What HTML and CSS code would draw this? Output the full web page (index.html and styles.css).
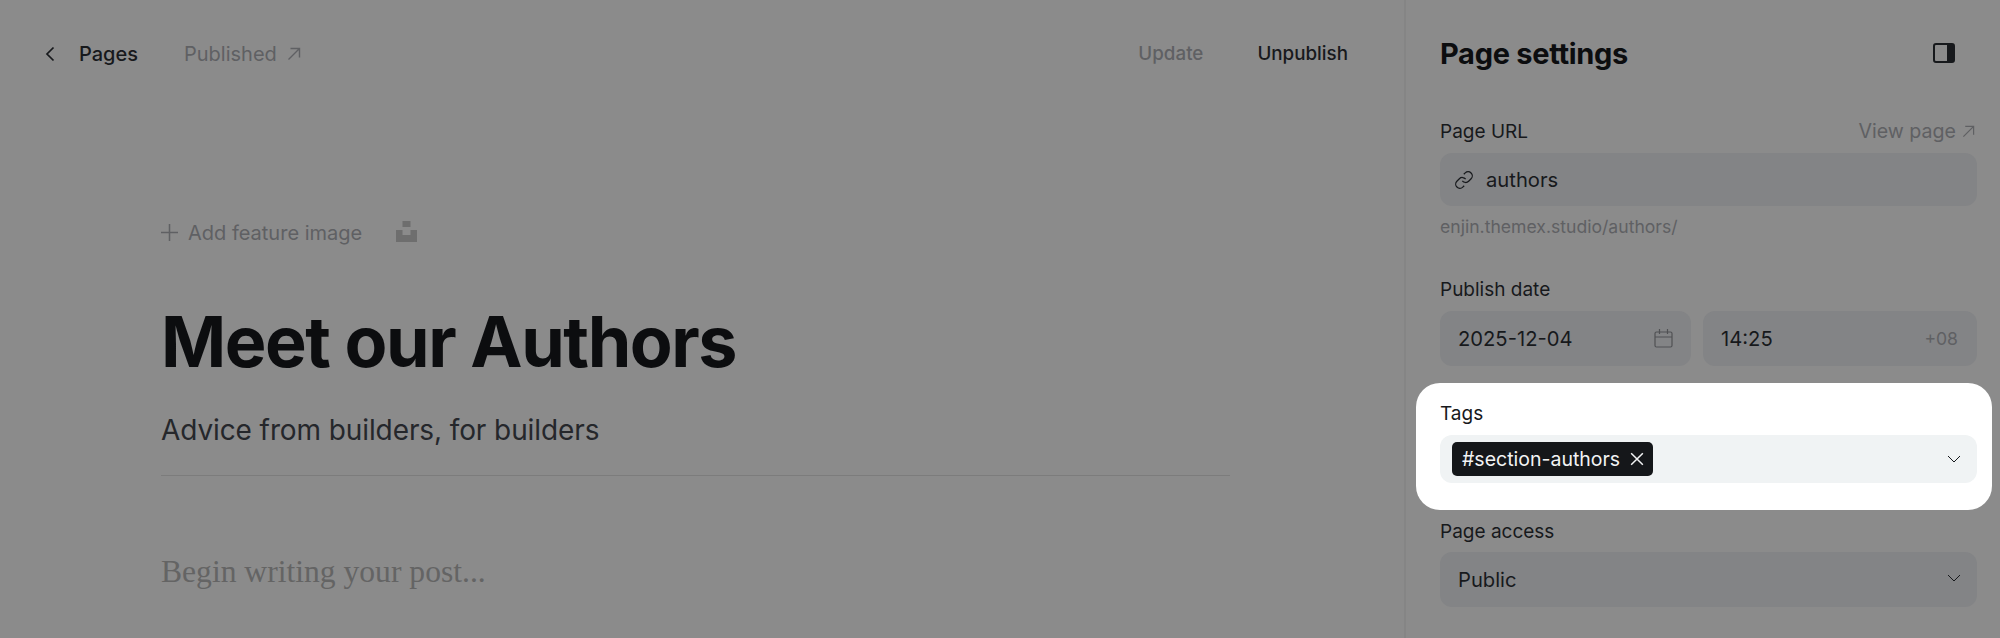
FILE: index.html
```html
<!DOCTYPE html>
<html lang="en">

<head>
  <meta charset="UTF-8" />
  <meta name="viewport" content="width=device-width, initial-scale=1.0" />
  <title>Page settings</title>
  <link rel="stylesheet" href="styles.css">
</head>

<body>
  <div class="container">
    <main class="editor">
      <header class="topbar">
        <div class="topbar-left">
          <svg class="back-icon" viewBox="0 0 12 16" fill="none" stroke="currentColor" stroke-width="1.7"><path d="M9.5 1.5 3 8l6.5 6.5" /></svg>
          <span class="crumb">Pages</span>
          <span class="status">Published
            <svg class="arrow-icon" viewBox="0 0 14 14" fill="none" stroke="currentColor" stroke-width="1.4"><path d="M1.5 12.5 12.5 1.5M3.5 1.5h9v9" /></svg>
          </span>
        </div>
        <div class="topbar-right">
          <span class="update">Update</span>
          <span class="unpublish">Unpublish</span>
        </div>
      </header>

      <section class="post">
        <div class="feature-row">
          <svg class="plus-icon" viewBox="0 0 18 18" fill="none" stroke="currentColor" stroke-width="1.6"><path d="M9 0v18M0 9h18" /></svg>
          <span class="feature-text">Add feature image</span>
          <svg class="unsplash-icon" viewBox="0 0 21 21" fill="currentColor"><path d="M6.5 0h8v6h-8zM0 9h6.500v5h8V9H21v12H0z" /></svg>
        </div>
        <h1 class="post-title">Meet our Authors</h1>
        <p class="post-excerpt">Advice from builders, for builders</p>
        <p class="post-body">Begin writing your post...</p>
      </section>
    </main>

    <aside class="sidebar">
      <div class="sidebar-head">
        <h2>Page settings</h2>
        <svg class="panel-icon" viewBox="0 0 22 20"><rect x="1" y="1" width="20" height="18" rx="2" fill="none" stroke="currentColor" stroke-width="2" /><path d="M14 1h5a2 2 0 0 1 2 2v14a2 2 0 0 1-2 2h-5z" fill="currentColor" /></svg>
      </div>

      <div class="field field-url">
        <div class="label-row">
          <label>Page URL</label>
          <span class="view-page">View page
            <svg class="arrow-icon small" viewBox="0 0 14 14" fill="none" stroke="currentColor" stroke-width="1.3"><path d="M1.5 12.5 12.5 1.5M3.5 1.5h9v9" /></svg>
          </span>
        </div>
        <div class="input url-input">
          <svg class="link-icon" viewBox="0 0 24 24" fill="none" stroke="currentColor" stroke-width="1.5"><path d="M10 13a5 5 0 0 0 7.540.54l3-3a5 5 0 0 0-7.070-7.070l-1.720 1.710" /><path d="M14 11a5 5 0 0 0-7.540-.54l-3 3a5 5 0 0 0 7.070 7.070l1.710-1.710" /></svg>
          <span>authors</span>
        </div>
        <p class="hint">enjin.themex.studio/authors/</p>
      </div>

      <div class="field field-date">
        <label>Publish date</label>
        <div class="date-row">
          <div class="input date-input">
            <span>2025-12-04</span>
            <svg class="calendar-icon" viewBox="0 0 19 19" fill="none" stroke="currentColor" stroke-width="1.2"><rect x="1" y="3" width="17" height="15" rx="1.500" /><path d="M1 8h17M5.500 0v5M13.500 0v5" /></svg>
          </div>
          <div class="input time-input">
            <span>14:25</span>
            <span class="timezone">+08</span>
          </div>
        </div>
      </div>

      <div class="field field-tags">
        <label>Tags</label>
        <div class="tags-input">
          <span class="tag">#section-authors
            <svg class="close-icon" viewBox="0 0 12 12" fill="none" stroke="currentColor" stroke-width="1.3"><path d="M1 1l10 10M11 1 1 11" /></svg>
          </span>
          <svg class="chevron-icon" viewBox="0 0 14 8" fill="none" stroke="currentColor" stroke-width="1"><path d="M1 1l6 6 6-6" /></svg>
        </div>
      </div>

      <div class="field field-access">
        <label>Page access</label>
        <div class="input select-input">
          <span>Public</span>
          <svg class="chevron-icon raised" viewBox="0 0 14 8" fill="none" stroke="currentColor" stroke-width="1"><path d="M1 1l6 6 6-6" /></svg>
        </div>
      </div>
    </aside>
  </div>
</body>

</html>
```

FILE: styles.css
```css
* {
  margin: 0;
  padding: 0;
  box-sizing: border-box;
}

body {
  font-family: Inter, "Noto Sans", sans-serif;
  background-color: #8b8b8b;
  color: #17191c;
}

svg {
  display: block;
  flex-shrink: 0;
}

.container {
  display: flex;
  width: 100vw;
  height: 100vh;
  overflow: hidden;
}

.editor {
  width: 1404px;
  flex-shrink: 0;
}

.topbar {
  display: flex;
  justify-content: space-between;
  align-items: center;
  height: 106px;
  padding: 1px 56px 0 44px;
  font-size: 18.800px;
  font-weight: 500;
}

.topbar-left,
.topbar-right,
.status {
  display: flex;
  align-items: center;
}

.topbar-left {
  font-size: 20px;
  font-weight: 400;
}

.back-icon {
  width: 12px;
  height: 16px;
  margin-right: 23px;
}

.crumb {
  margin-right: 46px;
  font-weight: 500;
}

.status {
  gap: 10px;
  color: #5f6063;
}

.arrow-icon {
  width: 14px;
  height: 14px;
}

.arrow-icon.small {
  width: 13px;
  height: 13px;
  margin-right: 2px;
}

.update {
  margin-right: 54px;
  color: #5f6063;
}

.post {
  width: 1230px;
  padding-left: 161px;
}

.feature-row {
  display: flex;
  align-items: center;
  height: 21px;
  margin-top: 116px;
  color: #5f6063;
  font-size: 20px;
}

.plus-icon {
  width: 17px;
  height: 17px;
  margin-right: 10px;
}

.unsplash-icon {
  width: 21px;
  height: 21px;
  margin-left: 34px;
  margin-bottom: 3px;
  color: #6e6e6e;
}

.post-title {
  margin-top: 56px;
  color: #0c0d0f;
  font-size: 70px;
  font-weight: 700;
  line-height: 85px;
  letter-spacing: -1.45px;
}

.post-excerpt {
  margin-top: 28px;
  padding-bottom: 26px;
  border-bottom: 1px solid #7c7c7c;
  color: #25272b;
  font-size: 28px;
  line-height: 37px;
  letter-spacing: -0.1px;
}

.post-body {
  margin-top: 77px;
  color: #646464;
  font-family: "Liberation Serif", serif;
  font-size: 31.600px;
  line-height: 38px;
}

.sidebar {
  flex: 1;
  padding: 0 23px 0 34px;
  border-left: 2px solid #858585;
}

.sidebar-head {
  display: flex;
  justify-content: space-between;
  align-items: center;
  height: 106px;
}

.sidebar-head h2 {
  color: #0c0d0f;
  font-size: 29px;
  font-weight: 700;
  letter-spacing: -0.3px;
}

.panel-icon {
  width: 22px;
  height: 20px;
  margin-right: 22px;
}

.field label {
  display: block;
  margin-bottom: -1px;
  padding-top: 1px;
  color: #17191c;
  font-size: 19px;
  font-weight: 400;
  line-height: 24px;
}

.label-row {
  display: flex;
  justify-content: space-between;
  align-items: center;
}

.view-page {
  display: flex;
  align-items: center;
  gap: 6px;
  color: #5f6063;
  font-size: 19.600px;
  line-height: 24px;
}

.input {
  display: flex;
  align-items: center;
  height: 55px;
  border-radius: 12px;
  background-color: #838486;
  font-size: 20.200px;
}

.field-url .label-row {
  margin-top: 13px;
}

.url-input {
  height: 53px;
  margin-top: 10px;
  padding-left: 14px;
  gap: 12px;
}

.link-icon {
  width: 20px;
  height: 20px;
}

.hint {
  margin-top: 10px;
  color: #5f6063;
  font-size: 17.600px;
  line-height: 22px;
}

.field-date {
  margin-top: 39px;
}

.date-row {
  display: grid;
  grid-template-columns: 251px 1fr;
  gap: 12px;
  margin-top: 10px;
}

.date-input,
.time-input,
.select-input {
  justify-content: space-between;
  padding: 0 18px;
}

.time-input {
  padding-right: 19px;
}

.calendar-icon {
  width: 19px;
  height: 19px;
  color: #505154;
}

.timezone {
  color: #5f6063;
  font-size: 17.600px;
}

.field-tags {
  margin: 17px -15px 0 -24px;
  padding: 18px 15px 27px 24px;
  border-radius: 24px;
  background-color: #fff;
}

.tags-input {
  display: flex;
  justify-content: space-between;
  align-items: center;
  height: 48px;
  margin-top: 10px;
  padding: 0 16px 0 12px;
  border-radius: 12px;
  background-color: #f0f3f4;
}

.tag {
  display: flex;
  align-items: center;
  gap: 10px;
  height: 34px;
  padding: 0 9px 0 10px;
  border-radius: 5px;
  background-color: #15171a;
  color: #f2f3f4;
  font-size: 19.500px;
}

.close-icon {
  width: 14px;
  height: 14px;
}

.chevron-icon {
  width: 14px;
  height: 8px;
}

.chevron-icon.raised {
  margin-bottom: 3px;
}

.field-access {
  margin-top: 9px;
}

.select-input {
  margin-top: 9px;
  padding-right: 16px;
}
```
